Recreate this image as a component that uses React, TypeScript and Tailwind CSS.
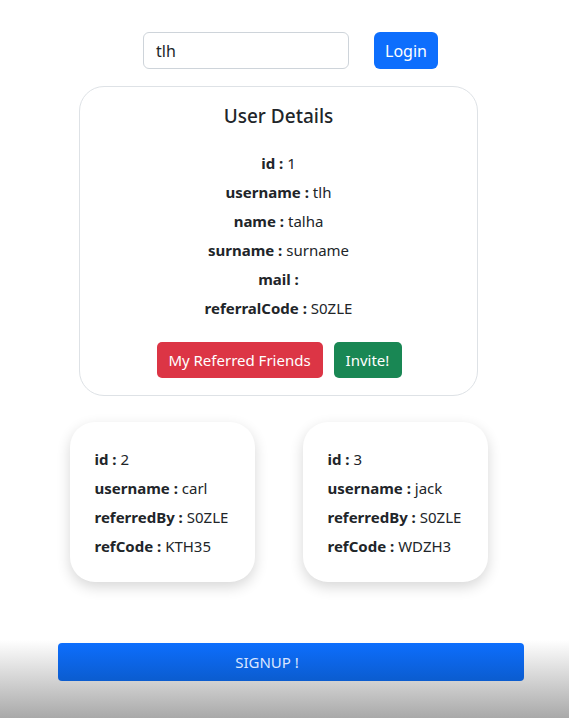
import React from "react";

const font = { fontFamily: '"Noto Sans", "Open Sans", sans-serif' };

function Row({ label, value }: { label: string; value: string }) {
  return (
    <div className="h-[29px] leading-[29px] text-[15px] text-[#212529] whitespace-nowrap">
      <span className="font-bold">{label} : </span>
      <span>{value}</span>
    </div>
  );
}

function FriendCard({ id, username, referredBy, refCode }: { id: string; username: string; referredBy: string; refCode: string }) {
  return (
    <div className="w-[185px] h-[160px] rounded-[25px] bg-white shadow-[0_5px_14px_rgba(0,0,0,0.16)] pl-[25px] pt-[23px]">
      <Row label="id" value={id} />
      <Row label="username" value={username} />
      <Row label="referredBy" value={referredBy} />
      <Row label="refCode" value={refCode} />
    </div>
  );
}

export default function App() {
  return (
    <div className="w-[569px] h-[718px] bg-[linear-gradient(to_bottom,#ffffff_0px,#ffffff_640px,#a9a9a9_718px)] overflow-hidden" style={font}>
      <div className="pt-[32px] flex justify-center pl-[12px] gap-[25px]">
        <div className="w-[206px] h-[37px] border border-[#ced4da] rounded-[6px] bg-white pl-[12px] flex items-center text-[16px] text-[#212529]">
          tlh
        </div>
        <div className="w-[64px] h-[37px] rounded-[6px] bg-[#0d6efd] text-white text-[16px] flex items-center justify-center">
          Login
        </div>
      </div>
      <div className="mt-[17px] flex justify-center pr-[12px]">
        <div className="w-[399px] h-[310px] rounded-[25px] border border-[#dee2e6] bg-white flex flex-col items-center pt-[17px]">
          <div className="h-[24px] leading-[24px] text-[19px] font-medium text-[#212529]">User Details</div>
          <div className="mt-[21px] flex flex-col items-center">
            <Row label="id" value="1" />
            <Row label="username" value="tlh" />
            <Row label="name" value="talha" />
            <Row label="surname" value="surname" />
            <Row label="mail" value="" />
            <Row label="referralCode" value="S0ZLE" />
          </div>
          <div className="mt-[19px] flex gap-[11px] pl-[1px]">
            <div className="w-[166px] h-[36px] rounded-[5px] bg-[#dc3545] text-white text-[15px] flex items-center justify-center">
              My Referred Friends
            </div>
            <div className="w-[68px] h-[36px] rounded-[5px] bg-[#198754] text-white text-[15px] flex items-center justify-center">
              Invite!
            </div>
          </div>
        </div>
      </div>
      <div className="mt-[26px] flex justify-center gap-[48px] pr-[12px]">
        <FriendCard id="2" username="carl" referredBy="S0ZLE" refCode="KTH35" />
        <FriendCard id="3" username="jack" referredBy="S0ZLE" refCode="WDZH3" />
      </div>
      <div className="mt-[61px] flex justify-center pl-[13px]">
        <div className="w-[466px] h-[38px] rounded-[4px] bg-[linear-gradient(to_bottom,#0d6efd,#0b5ccf)] text-[#dbe6ff] text-[15px] flex items-center justify-center pr-[48px]">
          SIGNUP !
        </div>
      </div>
    </div>
  );
}
